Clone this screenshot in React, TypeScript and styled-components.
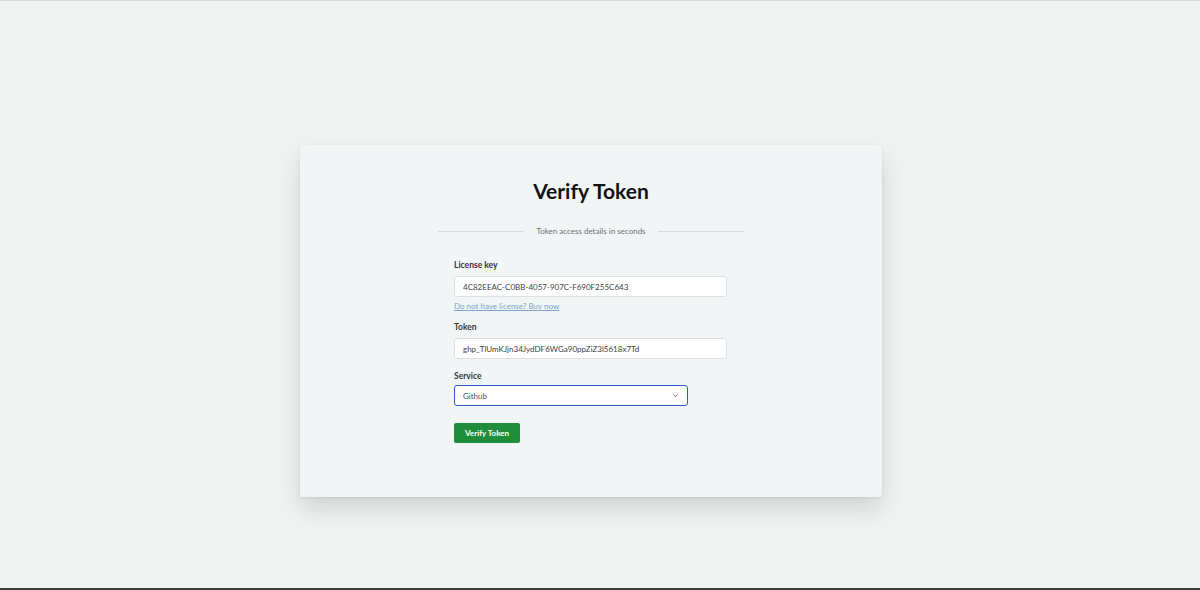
import React from 'react';
import styled, { createGlobalStyle } from 'styled-components';

const GlobalStyle = createGlobalStyle`
  html, body {
    margin: 0;
    padding: 0;
    background: #eff4f2;
    font-family: 'Lato', 'Noto Sans', sans-serif;
  }
  * {
    box-sizing: border-box;
  }
`;

const Page = styled.div`
  height: 590px;
  border-top: 1px solid #d3d9d7;
  border-bottom: 2px solid #3a3d3c;
  display: flex;
  justify-content: center;
  padding-top: 144px;
  padding-right: 18px;
`;

const Card = styled.div`
  width: 582px;
  height: 352px;
  background: #f1f5f5;
  border-radius: 2px;
  box-shadow: 0 12px 24px rgba(60, 70, 68, 0.18), 0 1px 3px rgba(0, 0, 0, 0.08);
  display: flex;
  flex-direction: column;
  align-items: center;
  padding-top: 33px;
`;

const Title = styled.h1`
  margin: 0;
  font-size: 21px;
  font-weight: 700;
  color: #111;
  line-height: 26px;
`;

const Divider = styled.div`
  width: 306px;
  margin-top: 22px;
  display: flex;
  align-items: center;
  gap: 12px;
  font-size: 8px;
  color: #6b7271;
  white-space: nowrap;

  &::before,
  &::after {
    content: '';
    flex: 1;
    height: 1px;
    background: #d5dbda;
  }
`;

const Form = styled.form`
  width: 306px;
  padding: 0 16px;
  margin-top: 24px;
  display: flex;
  flex-direction: column;
`;

const Label = styled.label<{ $top?: number; $bottom?: number }>`
  font-size: 8.5px;
  font-weight: 700;
  color: #333a39;
  margin-top: ${p => p.$top ?? 0}px;
  margin-bottom: ${p => p.$bottom ?? 6}px;
`;

const Input = styled.input`
  width: 273px;
  height: 21px;
  border: 1px solid #dbe0df;
  border-radius: 3px;
  background: #fff;
  padding: 0 8px;
  font-family: inherit;
  font-size: 8px;
  color: #3c4241;
  outline: none;
`;

const Link = styled.a`
  font-size: 8px;
  color: #7aa4cc;
  text-decoration: underline;
  margin-top: 4px;
`;

const Select = styled.div`
  width: 234px;
  height: 21px;
  border: 1.5px solid #2f5fc6;
  border-radius: 3px;
  background: #fff;
  padding: 0 8px;
  display: flex;
  align-items: center;
  justify-content: space-between;
  font-size: 8px;
  color: #4a5150;
`;

const Button = styled.button`
  align-self: flex-start;
  margin-top: 17px;
  width: 66px;
  height: 20px;
  border: none;
  border-radius: 2px;
  background: #1f8d3c;
  color: #fff;
  font-family: inherit;
  font-size: 8px;
  font-weight: 700;
  cursor: pointer;
`;

const Chevron = () => (
  <svg width="7" height="7" viewBox="0 0 10 10" fill="none" stroke="#666" strokeWidth="1.4">
    <path d="M2 3.5 L5 6.5 L8 3.5" />
  </svg>
);

export default function App() {
  return (
    <>
      <GlobalStyle />
      <Page>
        <Card>
          <Title>Verify Token</Title>
          <Divider>Token access details in seconds</Divider>
          <Form onSubmit={e => e.preventDefault()}>
            <Label>License key</Label>
            <Input defaultValue="4C82EEAC-C0BB-4057-907C-F690F255C643" />
            <Link href="#">Do not have license? Buy now</Link>
            <Label $top={11}>Token</Label>
            <Input defaultValue="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" />
            <Label $top={12} $bottom={4}>Service</Label>
            <Select>
              <span>Github</span>
              <Chevron />
            </Select>
            <Button type="submit">Verify Token</Button>
          </Form>
        </Card>
      </Page>
    </>
  );
}
